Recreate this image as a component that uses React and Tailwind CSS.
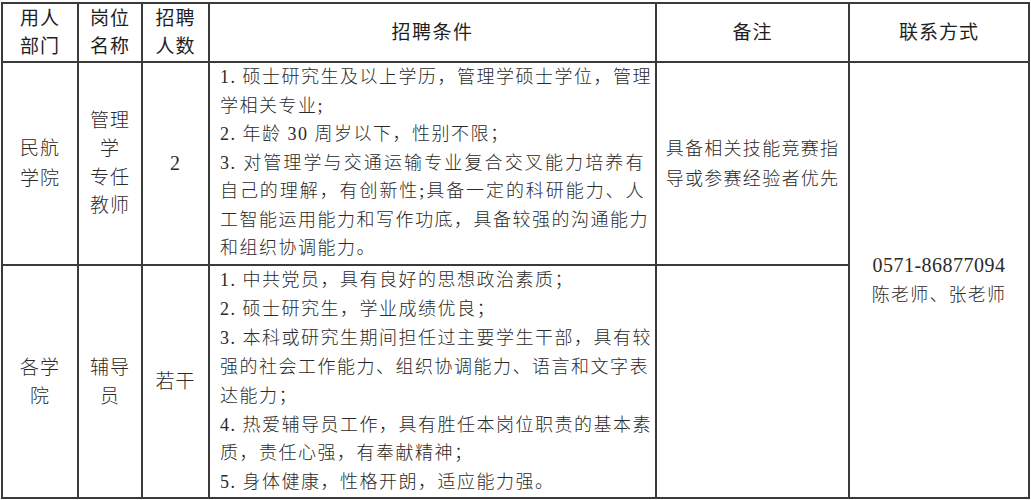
import React from "react";

const FONT = { fontFamily: '"Liberation Serif", "Noto Sans CJK SC", serif' };

function Lines({ lines, full = [], className = "" }) {
  return (
    <div className={className}>
      {lines.map((l, i) => (
        <div
          key={i}
          className={
            full.includes(i)
              ? "whitespace-nowrap text-justify [text-align-last:justify]"
              : "whitespace-nowrap"
          }
        >
          {l}
        </div>
      ))}
    </div>
  );
}

const row1 = [
  "1. 硕士研究生及以上学历，管理学硕士学位，管理",
  "学相关专业;",
  "2. 年龄 30 周岁以下，性别不限；",
  "3. 对管理学与交通运输专业复合交叉能力培养有",
  "自己的理解，有创新性;具备一定的科研能力、人",
  "工智能运用能力和写作功底，具备较强的沟通能力",
  "和组织协调能力。",
];

const row2 = [
  "1. 中共党员，具有良好的思想政治素质；",
  "2. 硕士研究生，学业成绩优良；",
  "3. 本科或研究生期间担任过主要学生干部，具有较",
  "强的社会工作能力、组织协调能力、语言和文字表",
  "达能力；",
  "4. 热爱辅导员工作，具有胜任本岗位职责的基本素",
  "质，责任心强，有奉献精神；",
  "5. 身体健康，性格开朗，适应能力强。",
];

export default function App() {
  const cell = "bg-white flex items-center justify-center text-center";
  const head = `${cell} text-[19px] leading-[28px] tracking-[1px] text-[#1e1e1e]`;
  const side = `${cell} text-[19px] leading-[29px] tracking-[1px] text-[#2a2a2a] font-light`;
  return (
    <div className="w-[1031px] h-[500px] bg-white overflow-hidden" style={FONT}>
      <div className="ml-[1px] mt-[2px] w-[1029px] grid grid-cols-[74px_62px_65px_445px_191px_178px] grid-rows-[57px_201px_231px] gap-[2px] p-[2px] bg-[#3a3a3a]">
        {/* header */}
        <div className={head}>
          <div>用人<br />部门</div>
        </div>
        <div className={head}>
          <div>岗位<br />名称</div>
        </div>
        <div className={head}>
          <div>招聘<br />人数</div>
        </div>
        <div className={head}>
          <div className="tracking-[1.5px]">招聘条件</div>
        </div>
        <div className={head}>
          <div>备注</div>
        </div>
        <div className={head}>
          <div>联系方式</div>
        </div>

        {/* row 1 */}
        <div className={side}>
          <div className="leading-[30px]">民航<br />学院</div>
        </div>
        <div className={side}>
          <div className="leading-[28.5px]">管理<br />学<br />专任<br />教师</div>
        </div>
        <div className={`${side} text-[20px]`}>
          <div>2</div>
        </div>
        <div className="bg-white pl-[10px] pr-[10px] text-[18px] leading-[28.5px] tracking-[1.5px] text-[#2a2a2a] font-light">
          <Lines lines={row1} full={[0, 3, 4, 5]} />
        </div>
        <div className={`${cell} text-[18px] leading-[30px] tracking-[1.3px] text-[#2a2a2a] font-light`}>
          <div>具备相关技能竞赛指<br />导或参赛经验者优先</div>
        </div>
        <div className={`${cell} row-span-2 text-[#2a2a2a] font-light`}>
          <div className="leading-[30px]">
            <div className="text-[20px] tracking-[0.5px]">0571-86877094</div>
            <div className="text-[18px] tracking-[1.2px]">陈老师、张老师</div>
          </div>
        </div>

        {/* row 2 */}
        <div className={side}>
          <div>各学<br />院</div>
        </div>
        <div className={side}>
          <div>辅导<br />员</div>
        </div>
        <div className={side}>
          <div>若干</div>
        </div>
        <div className="bg-white pl-[10px] pr-[10px] text-[18px] leading-[28.9px] tracking-[1.5px] text-[#2a2a2a] font-light">
          <Lines lines={row2} full={[2, 3, 5]} />
        </div>
        <div className="bg-white" />
      </div>
    </div>
  );
}
